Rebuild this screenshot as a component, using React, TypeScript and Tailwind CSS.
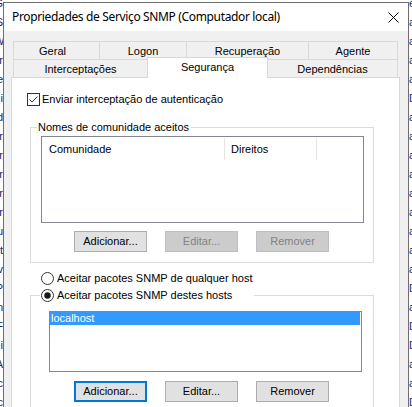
import React from "react";

const sans = { fontFamily: '"Liberation Sans", Arial, sans-serif' };
const title = { fontFamily: '"Noto Sans", "Open Sans", sans-serif' };

const leftLetters = ["G", "S", "W", "r", "e", "i", "d", "r", "r", "r", "r", "r", "u", "t", "v", "P", "n", "F", "i", "A", "c", "c", "N", "a"];
const rightLetters = ["e", "a", "a", "a", "a", "D", "a", "a", "a", "a", "a", "a", "a", "a", "a", "D", "a", "D", "D", "a", "a", "D", "a"];

function Btn({ label, kind }: { label: string; kind: "normal" | "disabled" | "focused" }) {
  const cls =
    kind === "disabled"
      ? "bg-[#cccccc] border border-[#bfbfbf] text-[#838383]"
      : kind === "focused"
      ? "bg-[#e1e1e1] border-2 border-[#0078d7] text-black"
      : "bg-[#e1e1e1] border border-[#adadad] text-black";
  return (
    <div className={`w-[73px] h-[21px] flex items-center justify-center text-[11px] leading-[13px] ${cls}`}>
      {label}
    </div>
  );
}

function Radio({ checked }: { checked?: boolean }) {
  return (
    <svg width="13" height="13" viewBox="0 0 13 13" className="shrink-0">
      <circle cx="6.5" cy="6.5" r="6" fill="white" stroke="#333333" strokeWidth="1" />
      {checked && <circle cx="6.5" cy="6.5" r="3.2" fill="#1a1a1a" />}
    </svg>
  );
}

export default function App() {
  return (
    <div className="flex w-[412px] h-[407px] overflow-hidden bg-white" style={sans}>
      {/* background window, left sliver */}
      <div className="w-[3px] shrink-0 overflow-hidden">
        <div className="w-[9px] -ml-[6px] -mt-[6px] text-right text-[11px] text-[#23236a]">
          {leftLetters.map((l, i) => (
            <div key={i} className="h-[19px] leading-[19px]">{l}</div>
          ))}
        </div>
      </div>

      {/* dialog */}
      <div className="w-[406px] shrink-0 mt-[2px] border-t border-l border-r border-[#6e6e6e] flex flex-col">
        <div className="h-[28px] bg-white flex items-center justify-between pl-[8px] pr-[9px] shrink-0">
          <span className="text-[12px] text-black leading-[16px] tracking-[-0.35px]" style={title}>
            Propriedades de Serviço SNMP (Computador local)
          </span>
          <svg width="11" height="11" viewBox="0 0 11 11">
            <path d="M0.5 0.5 L10.5 10.5 M10.5 0.5 L0.5 10.5" stroke="#000" strokeWidth="1" fill="none" />
          </svg>
        </div>

        <div className="flex-1 bg-[#f0f0f0] pt-[10px] pl-[7px] pr-[8px] flex flex-col text-[11px] text-black">
          {/* tabs */}
          <div className="mx-[2px]">
            <div className="flex h-[18px]">
              <div className="w-[86px] h-[18px] border-t border-l border-[#d9d9d9] flex items-center justify-center pr-[8px] pt-[1px]">Geral</div>
              <div className="w-[87px] h-[18px] border-t border-l border-[#d9d9d9] flex items-center justify-center pt-[1px]">Logon</div>
              <div className="w-[122px] h-[18px] border-t border-l border-[#d9d9d9] flex items-center justify-center pt-[1px]">Recuperação</div>
              <div className="w-[90px] h-[18px] border-t border-l border-r border-[#d9d9d9] flex items-center justify-center pt-[1px]">Agente</div>
            </div>
            <div className="flex h-[18px] items-end">
              <div className="w-[134px] h-[18px] border-t border-l border-[#d9d9d9] flex items-center justify-center pt-[1px]">Interceptações</div>
              <div className="relative z-10 w-[121px] h-[21px] -mb-px bg-white border-t border-l border-r border-[#d9d9d9] flex items-center justify-center pb-[2px]">Segurança</div>
              <div className="w-[130px] h-[18px] border-t border-r border-[#d9d9d9] flex items-center justify-center pt-[1px]">Dependências</div>
            </div>
          </div>

          {/* panel */}
          <div className="flex-1 bg-white border border-[#d9d9d9] flex flex-col">
            <div className="flex items-center ml-[15px] mt-[15px] gap-[2px] h-[13px]">
              <div className="w-[13px] h-[13px] border border-[#333333] bg-white flex items-center justify-center shrink-0">
                <svg width="11" height="11" viewBox="0 0 11 11">
                  <path d="M1.5 5.5 L4 8 L9.5 2.5" stroke="#333333" strokeWidth="1" fill="none" />
                </svg>
              </div>
              <span className="leading-[13px]">Enviar interceptação de autenticação</span>
            </div>

            <fieldset className="ml-[18px] mt-[15px] w-[344px] border border-[#dcdcdc] pt-[2px] pb-[10px]">
              <legend className="ml-[6px] pl-[1px] pr-[2px] leading-[13px]">Nomes de comunidade aceitos</legend>
              <div className="ml-[10px] w-[323px] h-[87px] border border-[#828790] bg-white">
                <div className="flex h-[24px] items-stretch">
                  <div className="w-[182px] pl-[7px] flex items-center">Comunidade</div>
                  <div className="w-px bg-[#e5e5e5] my-[1px]" />
                  <div className="w-[91px] pl-[6px] flex items-center">Direitos</div>
                  <div className="w-px bg-[#e5e5e5] my-[1px]" />
                </div>
              </div>
              <div className="flex gap-[18px] ml-[43px] mt-[8px]">
                <Btn label="Adicionar..." kind="normal" />
                <Btn label="Editar..." kind="disabled" />
                <Btn label="Remover" kind="disabled" />
              </div>
            </fieldset>

            <div className="flex items-center ml-[29px] mt-[9px] gap-[3px] h-[13px]">
              <Radio />
              <span className="leading-[13px]">Aceitar pacotes SNMP de qualquer host</span>
            </div>

            <fieldset className="ml-[18px] mt-[4px] w-[344px] border border-[#dcdcdc] pt-[9px] pb-[10px]">
              <legend className="ml-[9px] pl-[1px] w-[214px] leading-[13px]">
                <span className="flex items-center gap-[3px]">
                  <Radio checked />
                  <span>Aceitar pacotes SNMP destes hosts</span>
                </span>
              </legend>
              <div className="ml-[18px] w-[313px] h-[61px] border border-[#828790] bg-white">
                <div className="h-[13px] mr-[1px] bg-[#3399ff] text-white pl-[1px] leading-[13px]">localhost</div>
              </div>
              <div className="flex gap-[18px] ml-[43px] mt-[9px]">
                <Btn label="Adicionar..." kind="focused" />
                <Btn label="Editar..." kind="normal" />
                <Btn label="Remover" kind="normal" />
              </div>
            </fieldset>
          </div>
        </div>
      </div>

      {/* background window, right sliver */}
      <div className="w-[3px] shrink-0 overflow-hidden">
        <div className="w-[9px] -mt-[6px] text-[11px] text-[#23236a]">
          {rightLetters.map((l, i) => (
            <div key={i} className="h-[19px] leading-[19px]">{l}</div>
          ))}
        </div>
      </div>
    </div>
  );
}
